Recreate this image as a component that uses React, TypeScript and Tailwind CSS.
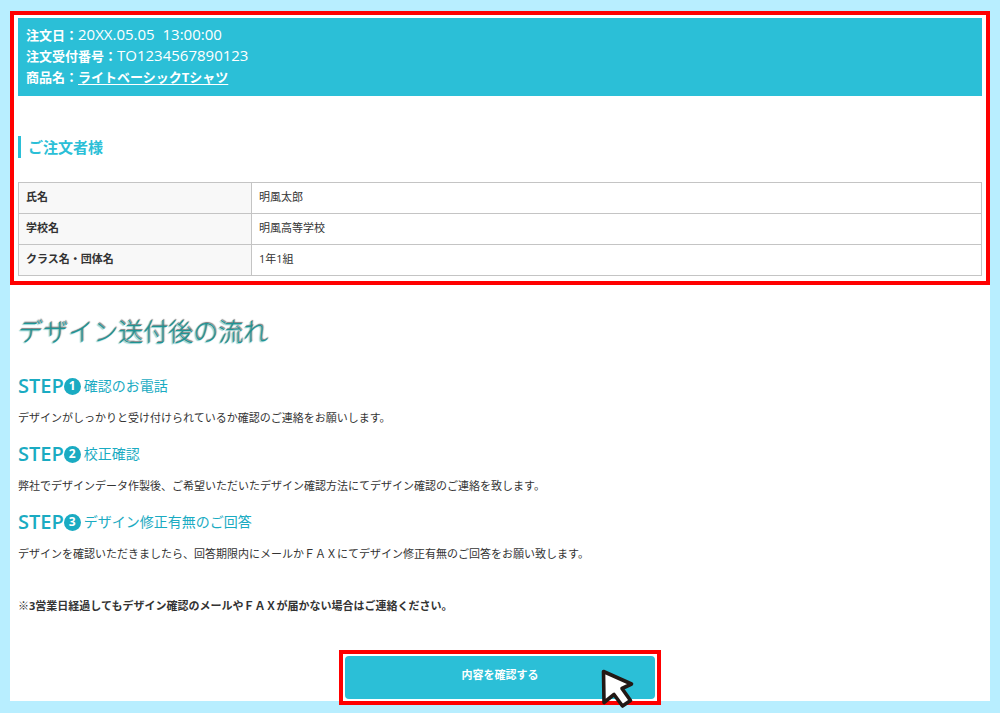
const customer = [
  { label: "氏名", value: "明風太郎" },
  { label: "学校名", value: "明風高等学校" },
  { label: "クラス名・団体名", value: "1年1組" },
];

const steps = [
  {
    title: "確認のお電話",
    text: "デザインがしっかりと受け付けられているか確認のご連絡をお願いします。",
  },
  {
    title: "校正確認",
    text: "弊社でデザインデータ作製後、ご希望いただいたデザイン確認方法にてデザイン確認のご連絡を致します。",
  },
  {
    title: "デザイン修正有無のご回答",
    text: "デザインを確認いただきましたら、回答期限内にメールかＦＡＸにてデザイン修正有無のご回答をお願い致します。",
  },
];

function OrderHeader() {
  return (
    <div className="bg-[#2bbfd7] px-2 pt-[7px] pb-2 text-[13px] leading-[21px] font-bold text-white">
      <p>
        注文日：
        <span className="text-[15px] leading-none font-medium whitespace-pre">
          20XX.05.05  13:00:00
        </span>
      </p>
      <p>
        注文受付番号：
        <span className="text-[15px] leading-none font-medium">
          TO1234567890123
        </span>
      </p>
      <p>
        商品名：
        <a href="#" className="underline underline-offset-2">
          ライトベーシックTシャツ
        </a>
      </p>
    </div>
  );
}

function CustomerTable() {
  return (
    <table className="w-full border-collapse text-left text-[11px] leading-4">
      <tbody>
        {customer.map((row) => (
          <tr key={row.label}>
            <th
              scope="row"
              className="w-[233px] border border-[#c4c4c4] bg-[#f8f8f8] px-[7px] pt-[6px] pb-2 font-bold"
            >
              {row.label}
            </th>
            <td className="border border-[#c4c4c4] px-[7px] pt-[6px] pb-2">
              {row.value}
            </td>
          </tr>
        ))}
      </tbody>
    </table>
  );
}

function Step({ no, title, text }: { no: number; title: string; text: string }) {
  return (
    <section className="h-[68px]">
      <h3 className="flex h-6 items-center text-[14px] leading-5 text-[#1aabc2]">
        <span className="text-[20px] leading-6 font-semibold">STEP</span>
        <span className="mr-[3px] flex size-[17px] items-center justify-center rounded-full bg-[#1aabc2] text-[12px] leading-4 font-bold text-white">
          {no}
        </span>
        {title}
      </h3>
      <p className="mt-3 text-[11px] leading-4">{text}</p>
    </section>
  );
}

function Cursor() {
  return (
    <svg
      viewBox="0 0 34 42"
      className="pointer-events-none absolute right-[23px] -bottom-2 h-[42px] w-[34px]"
      aria-hidden="true"
    >
      <path
        d="M3.5 4.5 L31.5 17 L22 21.5 L30.5 33.5 L22.5 39 L14 27.5 L4 35.5 Z"
        fill="#fff"
        stroke="#231815"
        strokeWidth="3.6"
        strokeLinejoin="round"
      />
    </svg>
  );
}

export default function App() {
  return (
    <div className="min-h-screen bg-[#b8eeff] px-[10px] pt-[11px] pb-3 font-['Open_Sans','Noto_Sans_CJK_JP',sans-serif] text-[#333]">
      <main className="bg-white">
        <div className="border-4 border-[#ff0000] px-1 pt-[3px] pb-[5px]">
          <OrderHeader />
          <h2 className="mt-10 mb-6 border-l-3 border-[#2bbfd7] pl-[7px] text-[15px] leading-[22px] font-bold text-[#2bbfd7]">
            ご注文者様
          </h2>
          <CustomerTable />
        </div>

        <div className="px-2 pt-[27px]">
          <h1 className="mb-[26px] font-['Noto_Sans_CJK_JP',sans-serif] text-[25px] leading-9 font-light text-[#1f9494] [text-shadow:1px_-1px_1px_#777,-1px_1px_1px_#8fd0d0]">
            デザイン送付後の流れ
          </h1>
          {steps.map((step, i) => (
            <Step key={step.title} no={i + 1} title={step.title} text={step.text} />
          ))}
          <p className="mt-5 text-[11px] leading-4 font-bold">
            ※3営業日経過してもデザイン確認のメールやＦＡＸが届かない場合はご連絡ください。
          </p>
        </div>

        <div className="mt-9 flex justify-center">
          <div className="relative -mb-1 w-[322px] border-4 border-[#ff0000] bg-white p-[2px]">
            <button
              type="button"
              className="h-[43px] w-full rounded-[4px] bg-[#2bbfd7] pb-1 text-[11px] font-bold text-white"
            >
              内容を確認する
            </button>
            <Cursor />
          </div>
        </div>
      </main>
    </div>
  );
}
